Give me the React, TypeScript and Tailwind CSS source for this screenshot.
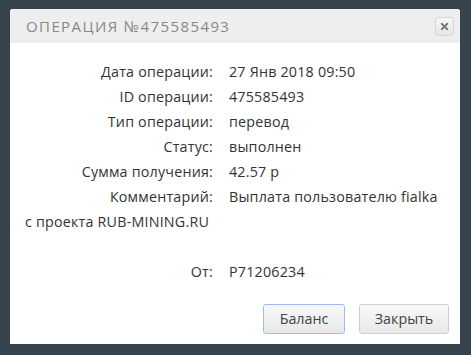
import { X } from "lucide-react";

const rows = [
	["Дата операции:", "27 Янв 2018 09:50"],
	["ID операции:", "475585493"],
	["Тип операции:", "перевод"],
	["Статус:", "выполнен"],
	["Сумма получения:", "42.57 р"],
	["Комментарий:", "Выплата пользователю fialka"],
];

export default function App() {
	return (
		<div className="h-[355px] w-[471px] bg-[#36434d] pl-[10px] pt-[9px] font-['Open_Sans',sans-serif]">
			<div className="flex h-[335px] w-[450px] flex-col overflow-hidden rounded-t-[3px] bg-white">
				<div className="flex h-[34px] items-center justify-between bg-[#eeeeee] pl-4 pr-[6px]">
					<span className="text-[15px] font-medium tracking-[1.4px] text-[#8a8684]">ОПЕРАЦИЯ №475585493</span>
					<button className="flex h-[19px] w-[19px] items-center justify-center rounded-[3px] border border-[#d6d6d6] bg-gradient-to-b from-[#f7f7f7] to-[#e6e6e6]">
						<X className="h-[11px] w-[11px] text-[#777]" strokeWidth={4} />
					</button>
				</div>
				<div className="px-[15px] pt-[16px] text-[14.3px] leading-[25px] tracking-[0.2px] text-[#333]">
					<div className="grid grid-cols-[188px_1fr] gap-x-4">
						{rows.map(([label, value]) => (
							<div key={label} className="contents">
								<div className="text-right">{label}</div>
								<div>{value}</div>
							</div>
						))}
					</div>
					<div>с проекта RUB-MINING.RU</div>
					<div className="h-[25px]" />
					<div className="grid grid-cols-[188px_1fr] gap-x-4">
						<div className="text-right">От:</div>
						<div>P71206234</div>
					</div>
				</div>
				<div className="mt-auto flex justify-end gap-[14px] pb-[10px] pr-[11px]">
					<button className="h-[30px] w-[82px] rounded-[3px] border border-[#9dbdf0] bg-gradient-to-b from-[#f9f9f9] to-[#e8e8e8] text-[14.3px] text-[#444]">
						Баланс
					</button>
					<button className="h-[30px] w-[90px] rounded-[3px] border border-[#cfcfcf] bg-gradient-to-b from-[#f9f9f9] to-[#e8e8e8] text-[14.3px] text-[#444]">
						Закрыть
					</button>
				</div>
			</div>
		</div>
	);
}
